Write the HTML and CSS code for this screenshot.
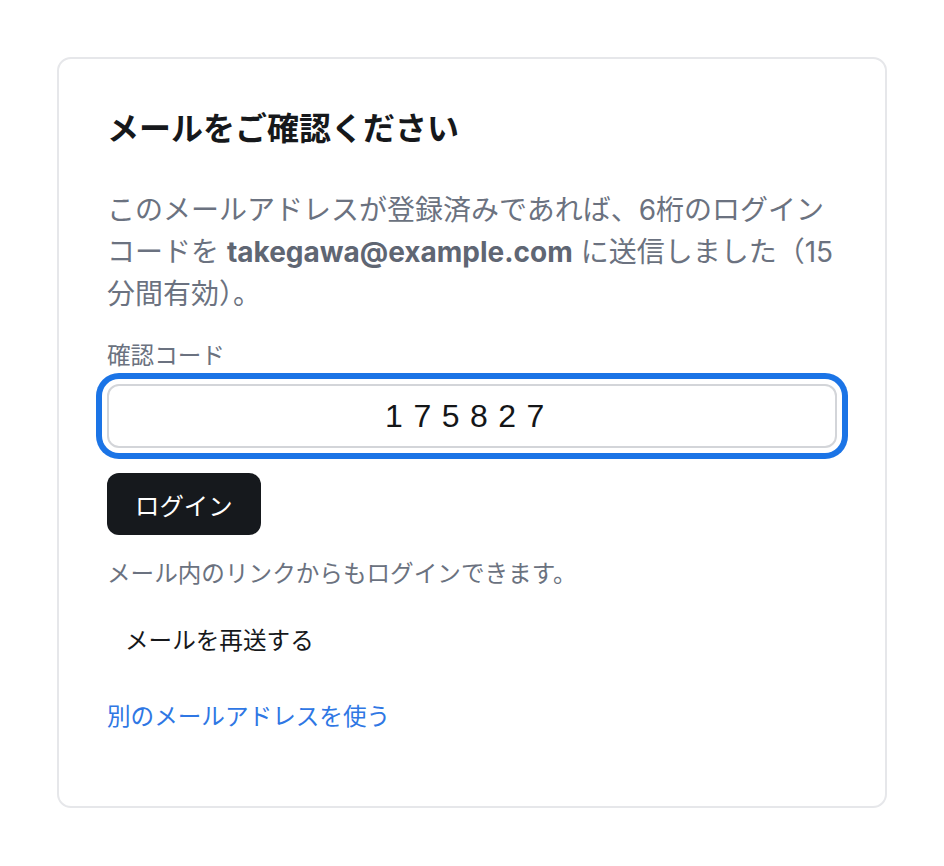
FILE: index.html
```html
<!DOCTYPE html>
<html lang="ja">
<head>
<meta charset="utf-8">
<title>メールをご確認ください</title>
<link rel="stylesheet" href="styles.css">
</head>
<body>
<main class="card">
  <h1 class="title">メールをご確認ください</h1>
  <p class="desc">このメールアドレスが登録済みであれば、6桁のログインコードを <strong class="email">takegawa@example.com</strong> に送信しました（15分間有効）。</p>
  <label class="label" for="code">確認コード</label>
  <div class="field">
    <input id="code" class="code-input" type="text" value="175827" readonly>
  </div>
  <div class="actions">
    <button class="btn-primary" type="button">ログイン</button>
  </div>
  <p class="hint">メール内のリンクからもログインできます。</p>
  <div class="resend-row">
    <button class="btn-ghost" type="button">メールを再送する</button>
  </div>
  <a class="link" href="#">別のメールアドレスを使う</a>
</main>
</body>
</html>
```
FILE: styles.css
```css
html, body {
  margin: 0;
  padding: 0;
  background: #ffffff;
}
body {
  font-family: Inter, "Noto Sans CJK JP", sans-serif;
  padding: 57px 57px;
}
.card {
  box-sizing: border-box;
  width: 830px;
  height: 751px;
  border: 2px solid #e6e7ea;
  border-radius: 14px;
  padding: 50px 48px;
  display: flex;
  flex-direction: column;
  align-items: flex-start;
}
.title {
  margin: 0;
  font-size: 32px;
  line-height: 40px;
  font-weight: 700;
  color: #16181b;
}
.desc {
  margin: 40px 0 0;
  font-size: 28px;
  line-height: 42px;
  color: #6b7280;
}
.email {
  font-weight: 700;
  color: #5f6673;
}
.label {
  margin-top: 25px;
  font-size: 23.6px;
  line-height: 32px;
  color: #6b7280;
}
.field {
  margin-top: 12px;
  width: 100%;
}
.code-input {
  box-sizing: border-box;
  width: 100%;
  height: 64px;
  border: 2px solid #d3d5d9;
  border-radius: 12px;
  background: #ffffff;
  text-align: center;
  font-family: "Liberation Sans", Inter, sans-serif;
  font-size: 32px;
  letter-spacing: 10.5px;
  padding: 0 4px 0 0;
  color: #141618;
  outline: none;
  box-shadow: 0 0 0 5px #ffffff, 0 0 0 11px #1b74e6;
}
.actions {
  margin-top: 25px;
}
.btn-primary {
  height: 62px;
  padding: 0 28px;
  border: none;
  border-radius: 12px;
  background: #16191d;
  color: #ffffff;
  font-family: inherit;
  font-size: 24.4px;
}
.hint {
  margin: 23px 0 0;
  font-size: 23.6px;
  line-height: 32px;
  color: #6b7280;
}
.resend-row {
  margin-top: 21px;
}
.btn-ghost {
  border: none;
  background: transparent;
  padding: 14px 18px;
  font-family: inherit;
  font-size: 23.6px;
  line-height: 32px;
  color: #16181b;
}
.link {
  margin-top: 30px;
  font-size: 23.6px;
  line-height: 32px;
  color: #2f77e4;
  text-decoration: none;
}
```
